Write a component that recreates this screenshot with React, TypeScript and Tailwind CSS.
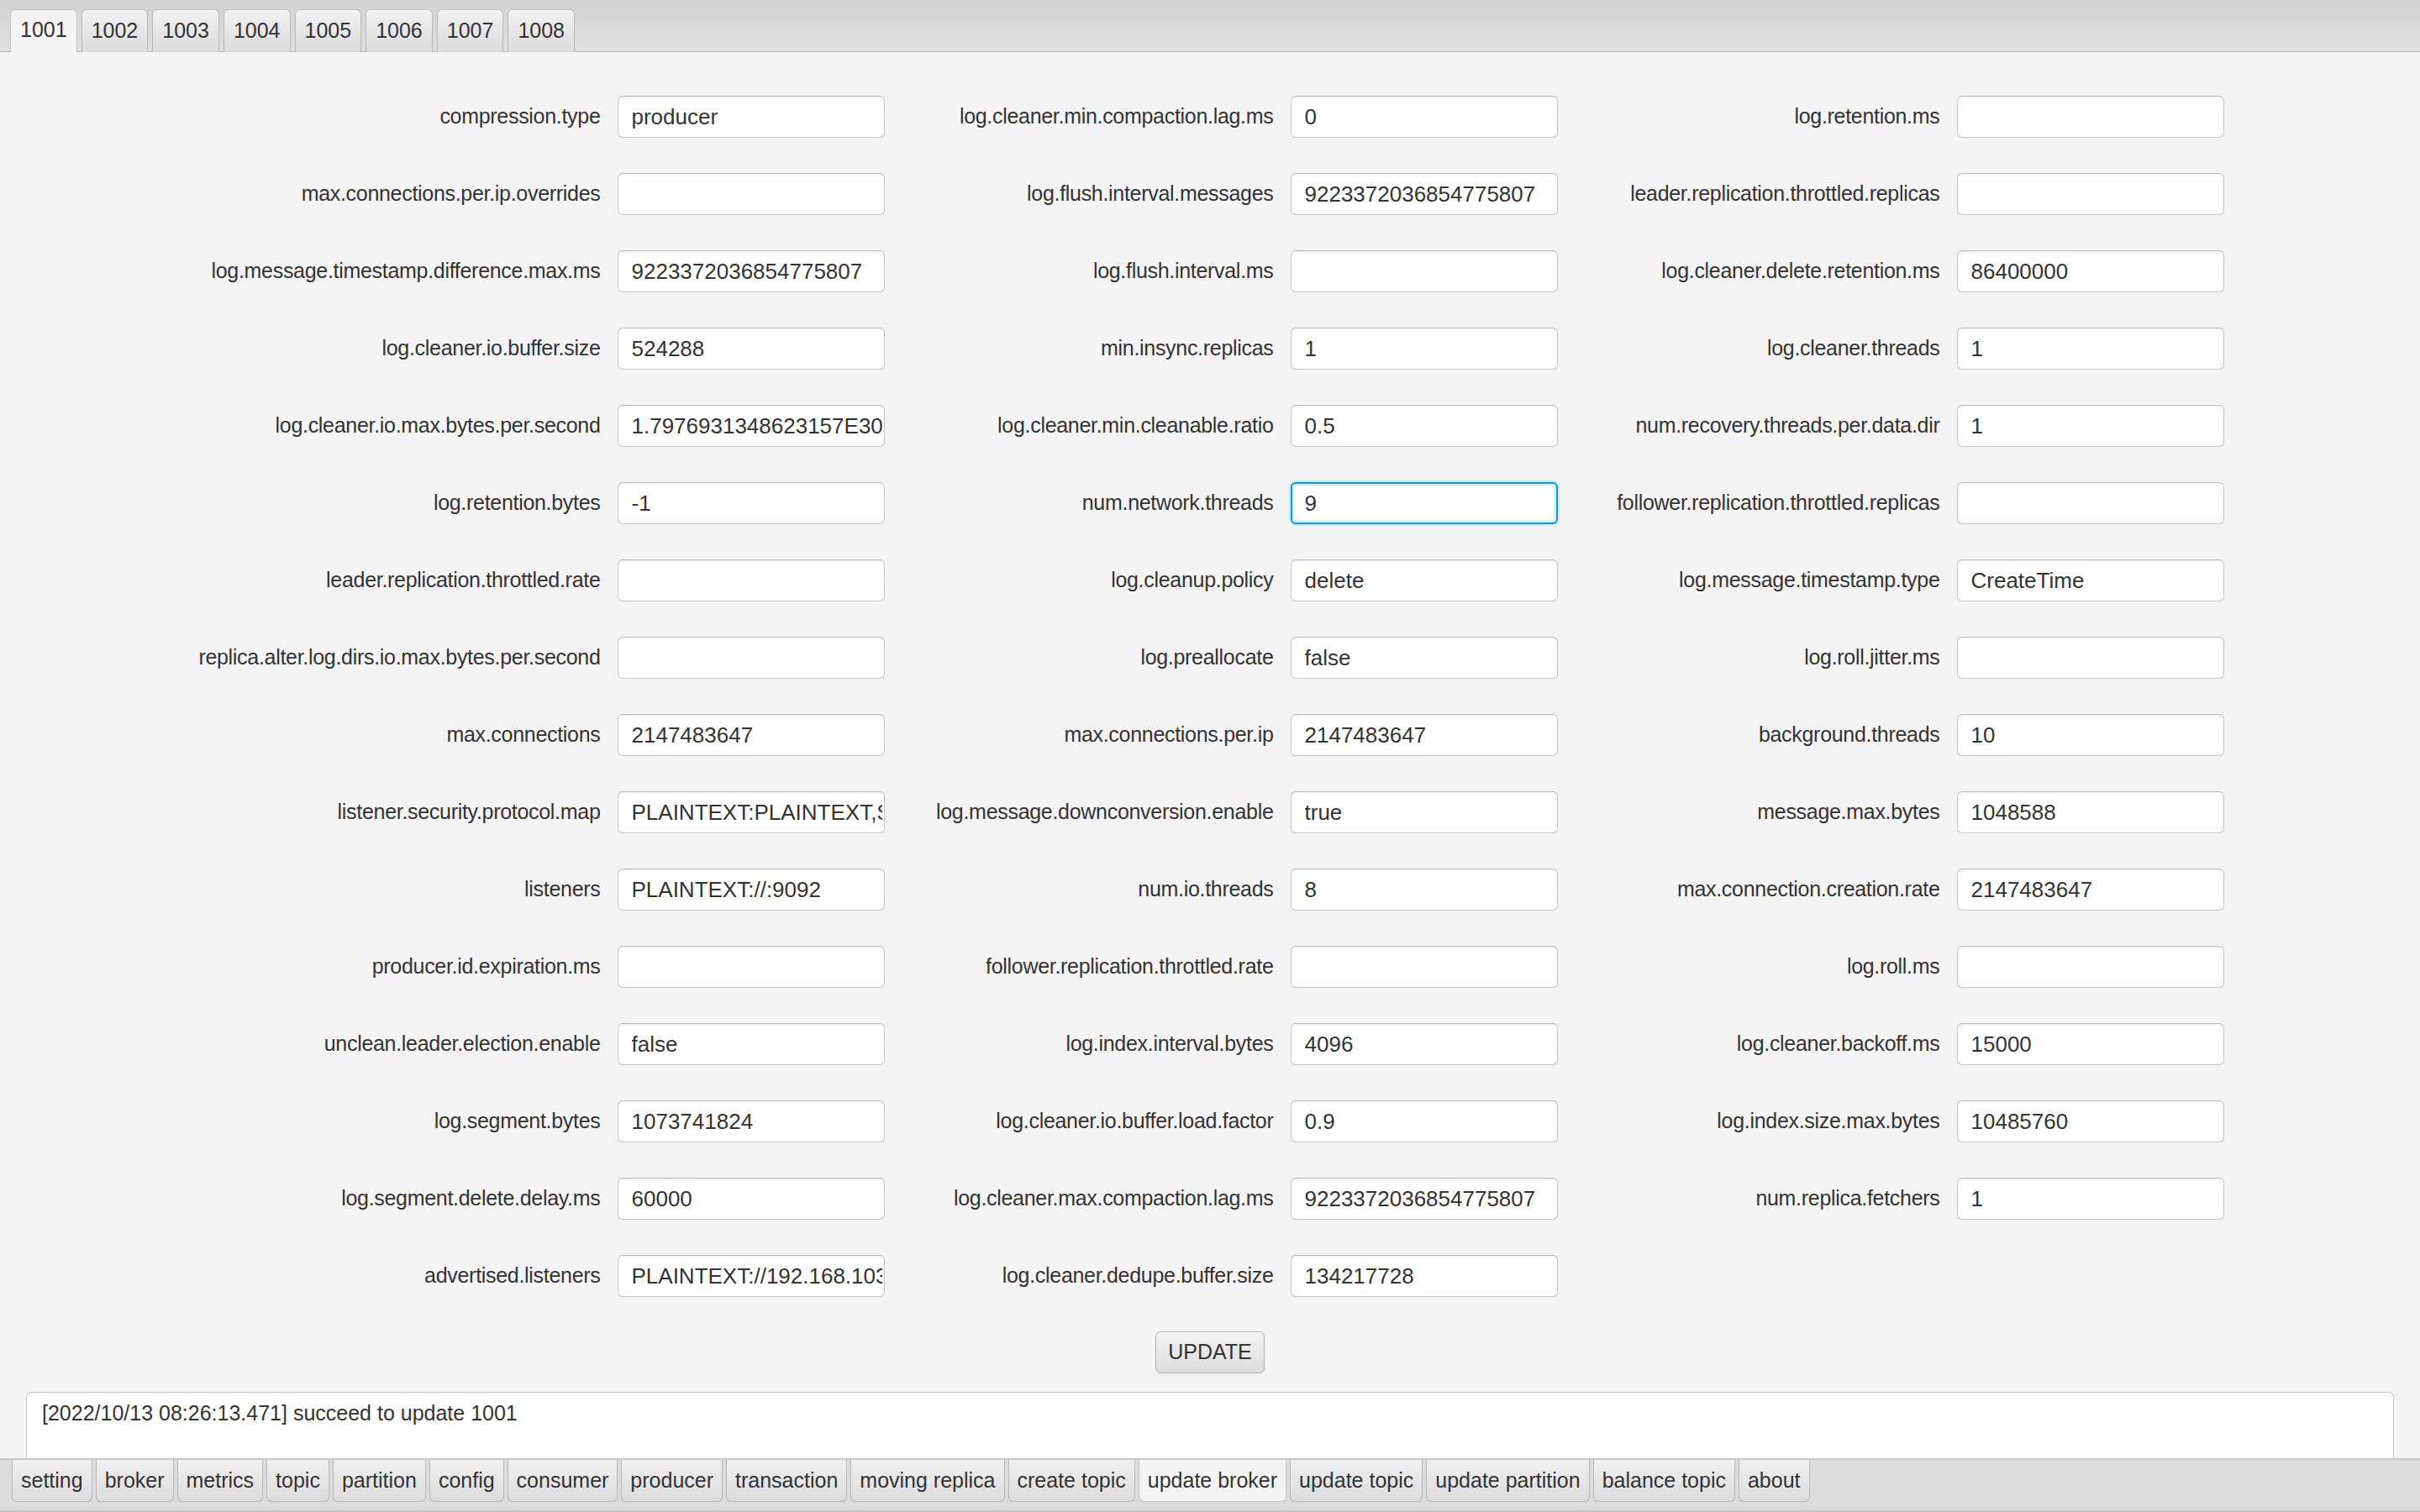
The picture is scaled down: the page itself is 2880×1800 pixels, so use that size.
import { useState } from 'react';

const BROKERS = ['1001', '1002', '1003', '1004', '1005', '1006', '1007', '1008'];

const MENU = [
  'setting',
  'broker',
  'metrics',
  'topic',
  'partition',
  'config',
  'consumer',
  'producer',
  'transaction',
  'moving replica',
  'create topic',
  'update broker',
  'update topic',
  'update partition',
  'balance topic',
  'about',
];

type Row = [string, string];

interface Column {
  labelClass: string;
  rows: Row[];
}

const COLUMNS: Column[] = [
  {
    labelClass: 'w-[481px]',
    rows: [
      ['compression.type', 'producer'],
      ['max.connections.per.ip.overrides', ''],
      ['log.message.timestamp.difference.max.ms', '9223372036854775807'],
      ['log.cleaner.io.buffer.size', '524288'],
      ['log.cleaner.io.max.bytes.per.second', '1.7976931348623157E308'],
      ['log.retention.bytes', '-1'],
      ['leader.replication.throttled.rate', ''],
      ['replica.alter.log.dirs.io.max.bytes.per.second', ''],
      ['max.connections', '2147483647'],
      ['listener.security.protocol.map', 'PLAINTEXT:PLAINTEXT,SSL:SSL,SASL_PLAINTEXT:SASL_PLAINTEXT'],
      ['listeners', 'PLAINTEXT://:9092'],
      ['producer.id.expiration.ms', ''],
      ['unclean.leader.election.enable', 'false'],
      ['log.segment.bytes', '1073741824'],
      ['log.segment.delete.delay.ms', '60000'],
      ['advertised.listeners', 'PLAINTEXT://192.168.103.1:9092'],
    ],
  },
  {
    labelClass: 'w-[403px]',
    rows: [
      ['log.cleaner.min.compaction.lag.ms', '0'],
      ['log.flush.interval.messages', '9223372036854775807'],
      ['log.flush.interval.ms', ''],
      ['min.insync.replicas', '1'],
      ['log.cleaner.min.cleanable.ratio', '0.5'],
      ['num.network.threads', '9'],
      ['log.cleanup.policy', 'delete'],
      ['log.preallocate', 'false'],
      ['max.connections.per.ip', '2147483647'],
      ['log.message.downconversion.enable', 'true'],
      ['num.io.threads', '8'],
      ['follower.replication.throttled.rate', ''],
      ['log.index.interval.bytes', '4096'],
      ['log.cleaner.io.buffer.load.factor', '0.9'],
      ['log.cleaner.max.compaction.lag.ms', '9223372036854775807'],
      ['log.cleaner.dedupe.buffer.size', '134217728'],
    ],
  },
  {
    labelClass: 'w-[395px]',
    rows: [
      ['log.retention.ms', ''],
      ['leader.replication.throttled.replicas', ''],
      ['log.cleaner.delete.retention.ms', '86400000'],
      ['log.cleaner.threads', '1'],
      ['num.recovery.threads.per.data.dir', '1'],
      ['follower.replication.throttled.replicas', ''],
      ['log.message.timestamp.type', 'CreateTime'],
      ['log.roll.jitter.ms', ''],
      ['background.threads', '10'],
      ['message.max.bytes', '1048588'],
      ['max.connection.creation.rate', '2147483647'],
      ['log.roll.ms', ''],
      ['log.cleaner.backoff.ms', '15000'],
      ['log.index.size.max.bytes', '10485760'],
      ['num.replica.fetchers', '1'],
    ],
  },
];

function Field({
  label,
  value,
  labelClass,
  focused,
}: {
  label: string;
  value: string;
  labelClass: string;
  focused: boolean;
}) {
  return (
    <div className="flex h-[50px] items-center gap-[20px]">
      <label className={`${labelClass} whitespace-nowrap text-right text-[25px] tracking-[-0.3px]`}>{label}</label>
      <input
        readOnly
        value={value}
        className={`h-[50px] w-[318px] rounded-[6px] bg-white pr-[2px] text-[26px] text-[#333333] outline-none ${
          focused
            ? 'border-2 border-[#0a9ad2] pl-[15px] shadow-[0_0_0_2px_rgba(3,158,211,0.16),inset_0_0_0_3px_#d9eef8]'
            : 'border border-[#c6c6c6] border-t-[#b9b9b9] pl-[16px] shadow-[inset_0_3px_3px_-2px_rgba(0,0,0,0.07)]'
        }`}
      />
    </div>
  );
}

function BrokerTabs({ active, onSelect }: { active: string; onSelect: (id: string) => void }) {
  return (
    <div className="flex h-[62px] shrink-0 items-end gap-[5px] border-b border-[#b8b8b8] bg-gradient-to-b from-[#d3d3d3] to-[#dfdfdf] pl-[12px]">
      {BROKERS.map((id) => {
        const isActive = id === active;
        return (
          <button
            key={id}
            type="button"
            onClick={() => onSelect(id)}
            className={`-mb-px flex h-[51px] items-center rounded-t-[6px] border border-b-0 px-[11px] text-[25px] ${
              isActive
                ? 'border-[#c2c2c2] bg-[#f4f4f4] pb-[2px]'
                : 'border-[#b8b8b8] bg-gradient-to-b from-[#f2f2f2] to-[#dbdbdb] shadow-[inset_0_1px_0_#fafafa]'
            }`}
          >
            {id}
          </button>
        );
      })}
    </div>
  );
}

function MenuTabs({ active, onSelect }: { active: string; onSelect: (m: string) => void }) {
  return (
    <div className="flex h-[64px] shrink-0 items-start gap-[4px] border-y-2 border-t-[#c9c9c9] border-b-[#c4c4c4] bg-[#dcdcdc] pl-[14px]">
      {MENU.map((m) => {
        const isActive = m === active;
        return (
          <button
            key={m}
            type="button"
            onClick={() => onSelect(m)}
            className={`flex h-[50px] items-center whitespace-nowrap rounded-b-[6px] border border-t-0 px-[10px] text-[25px] ${
              isActive
                ? 'border-[#c4c4c4] bg-[#f4f4f4]'
                : 'border-[#b8b8b8] bg-gradient-to-b from-[#f0f0f0] to-[#dcdcdc]'
            }`}
          >
            {m}
          </button>
        );
      })}
    </div>
  );
}

export default function App() {
  const [broker, setBroker] = useState('1001');
  const [menu, setMenu] = useState('update broker');

  return (
    <div className="flex h-[1800px] w-[2880px] flex-col overflow-hidden bg-[#f4f4f4] font-['Liberation_Sans',Arial,sans-serif] text-[#333333]">
      <BrokerTabs active={broker} onSelect={setBroker} />

      <main className="flex flex-1 flex-col items-center pt-[52px]">
        <div className="flex items-start gap-[60px]">
          {COLUMNS.map((col, ci) => (
            <div key={ci} className="flex flex-col gap-[42px]">
              {col.rows.map(([label, value]) => (
                <Field
                  key={label}
                  label={label}
                  value={value}
                  labelClass={col.labelClass}
                  focused={label === 'num.network.threads'}
                />
              ))}
            </div>
          ))}
        </div>
        <button
          type="button"
          className="mt-[41px] h-[50px] w-[130px] rounded-[6px] border border-[#b3b3b3] bg-gradient-to-b from-[#f3f3f3] to-[#dddddd] text-[25px] shadow-[inset_0_1px_0_#fcfcfc]"
        >
          UPDATE
        </button>
      </main>

      <div className="mx-[31px] mt-[22px] h-[79px] shrink-0 rounded-t-[6px] border border-b-0 border-[#c6c6c6] bg-white px-[18px] pt-[7px] text-[25px] leading-[34px] shadow-[inset_0_3px_3px_-2px_rgba(0,0,0,0.06)]">
        [2022/10/13 08:26:13.471] succeed to update 1001
      </div>

      <MenuTabs active={menu} onSelect={setMenu} />
    </div>
  );
}
